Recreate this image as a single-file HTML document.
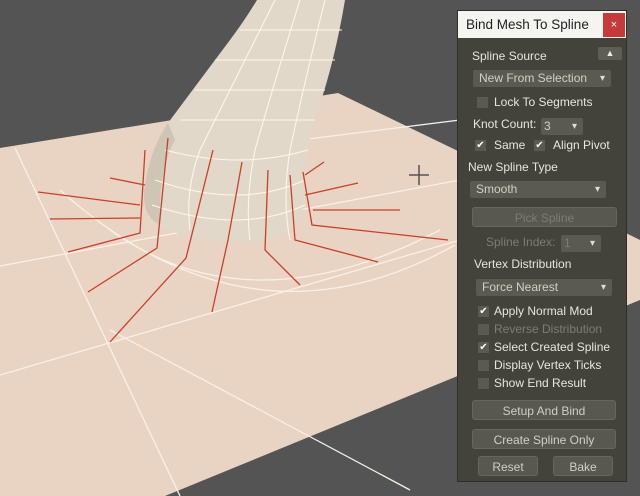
<!DOCTYPE html>
<html><head><style>
body{margin:0;width:640px;height:496px;overflow:hidden;background:#545454;font-family:"Liberation Sans",sans-serif;position:relative}
svg{position:absolute;left:0;top:0}
#p{position:absolute;left:457px;top:10px;width:170px;height:472px;background:#43433b;border:1px solid #2e2e2a;box-sizing:border-box}
#t{position:absolute;left:0;top:0;width:168px;height:27px;background:#f4f4f0;color:#222;font-size:13.5px;line-height:27px;padding-left:8px;box-sizing:border-box}
#x{position:absolute;right:1px;top:2px;width:22px;height:24px;background:#c53a3a;color:#fff;font-size:11px;text-align:center;line-height:24px}
.l{position:absolute;color:#e6e6dc;font-size:12px;white-space:nowrap}
.dd{position:absolute;background:#5a5a50;color:#d0d0c6;font-size:12px;height:17px;line-height:17px;padding-left:6px;box-sizing:border-box;border-radius:2px}
.dd:after{content:"▾";position:absolute;right:6px;color:#ddd;font-size:10px}
.cb{position:absolute;width:11px;height:11px;background:#5a5a50;color:#fff;font-size:10px;line-height:11px;text-align:center}
.b{position:absolute;background:#585850;color:#cfcfc5;font-size:12px;text-align:center;height:20px;line-height:20px;border-radius:3px;border:1px solid #66665c;box-sizing:border-box}
</style></head><body>
<svg width="640" height="496">
<polygon points="0,148 338,93 460,152 640,240 640,300 460,375 165,496 0,496" fill="#e9d3c3"/>
<g stroke="#fbf0e6" stroke-width="1.3" fill="none">
<path d="M15,148 L180,496"/><path d="M0,375 L460,240"/><path d="M0,266 L460,180"/>
<path d="M110,330 L410,490"/><path d="M60,190 Q250,360 455,245"/><path d="M110,230 Q250,330 440,230"/>
<path d="M300,140 L460,120"/>
</g>
<path d="M257,0 L345,0 Q335,60 318,110 Q305,150 305,180 Q310,230 270,240 Q220,248 160,228 Q140,215 145,185 Q150,150 168,123 Q200,80 230,40 Q245,20 257,0 Z" fill="#e2d8c9"/>
<path d="M145,185 Q150,150 168,123 L175,140 Q158,170 160,225 Q140,215 145,185Z" fill="#cfc5b5"/>
<g stroke="#fff6e6" stroke-width="1.1" fill="none">
<path d="M275,0 Q240,70 200,150 Q185,190 190,230"/><path d="M300,0 Q275,80 255,150 Q245,200 250,240"/><path d="M325,0 Q305,80 290,150 Q282,200 290,240"/>
<path d="M240,30 L342,30"/><path d="M215,60 L335,60"/><path d="M195,90 L325,90"/><path d="M180,120 L315,120"/><path d="M165,150 Q240,170 308,150"/><path d="M155,180 Q240,210 305,180"/><path d="M152,205 Q240,235 305,205"/>
</g>
<g stroke="#c8402a" stroke-width="1.3" fill="none">
<path d="M38,192 L140,205"/><path d="M50,219 L140,218"/><path d="M68,252 L140,233 L145,150"/><path d="M88,292 L157,248 L168,138"/><path d="M110,342 L186,258 L213,150"/>
<path d="M212,312 L228,240 L242,162"/><path d="M300,285 L265,250 L268,170"/><path d="M378,262 L295,240 L290,175"/>
<path d="M448,240 L312,225 L303,172"/><path d="M400,210 L313,210"/><path d="M358,183 L305,195"/><path d="M324,162 L305,175"/><path d="M110,178 L145,185"/>
</g>
<g stroke="#555" stroke-width="1.5"><path d="M419,165 L419,185 M409,175 L429,175"/></g>
</svg>
<div id="p">
<div id="t">Bind Mesh To Spline<div id="x">×</div></div>
<div class="l" style="left:14px;top:38px">Spline Source</div>
<div style="position:absolute;left:140px;top:36px;width:24px;height:13px;background:#5e5e55;border-radius:2px;color:#eee;font-size:9px;text-align:center;line-height:13px">▲</div>
<div class="dd" style="left:15px;top:59px;width:138px">New From Selection</div>
<div class="cb" style="left:19px;top:86px"></div><div class="l" style="left:36px;top:84px">Lock To Segments</div>
<div class="l" style="left:15px;top:106px">Knot Count:</div><div class="dd" style="left:83px;top:107px;width:42px;padding-left:3px">3</div>
<div class="cb" style="left:17px;top:129px">✔</div><div class="l" style="left:36px;top:127px">Same</div>
<div class="cb" style="left:76px;top:129px">✔</div><div class="l" style="left:95px;top:127px">Align Pivot</div>
<div class="l" style="left:10px;top:149px">New Spline Type</div>
<div class="dd" style="left:12px;top:170px;width:136px">Smooth</div>
<div class="b" style="left:14px;top:196px;width:145px;color:#7c7c72">Pick Spline</div>
<div class="l" style="left:28px;top:224px;color:#7c7c72">Spline Index:</div><div class="dd" style="left:103px;top:224px;width:40px;color:#7c7c72;padding-left:3px">1</div>
<div class="l" style="left:16px;top:246px">Vertex Distribution</div>
<div class="dd" style="left:18px;top:268px;width:136px">Force Nearest</div>
<div class="cb" style="left:20px;top:295px">✔</div><div class="l" style="left:36px;top:293px">Apply Normal Mod</div>
<div class="cb" style="left:20px;top:313px"></div><div class="l" style="left:36px;top:311px;color:#7c7c72">Reverse Distribution</div>
<div class="cb" style="left:20px;top:331px">✔</div><div class="l" style="left:36px;top:329px">Select Created Spline</div>
<div class="cb" style="left:20px;top:349px"></div><div class="l" style="left:36px;top:347px">Display Vertex Ticks</div>
<div class="cb" style="left:20px;top:367px"></div><div class="l" style="left:36px;top:365px">Show End Result</div>
<div class="b" style="left:14px;top:389px;width:144px">Setup And Bind</div>
<div class="b" style="left:14px;top:418px;width:144px">Create Spline Only</div>
<div class="b" style="left:20px;top:445px;width:60px">Reset</div>
<div class="b" style="left:95px;top:445px;width:60px">Bake</div>
</div>
</body></html>
